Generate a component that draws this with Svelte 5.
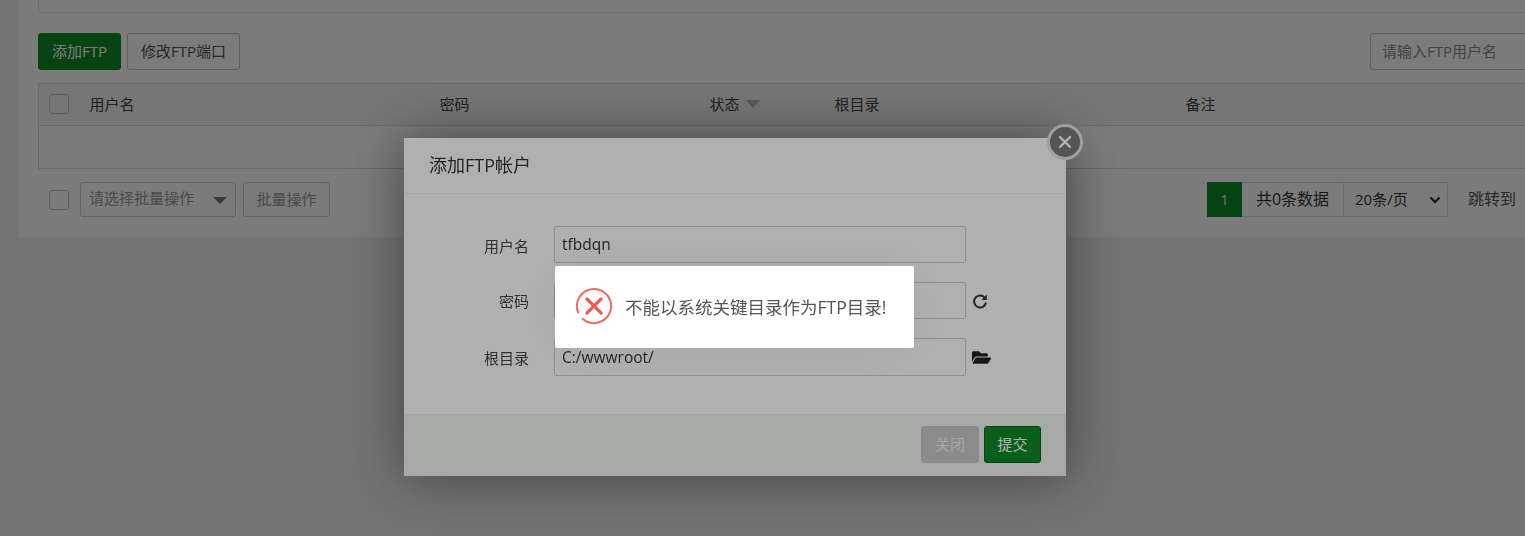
<script>
  const columns = [
    { label: '用户名', width: 350 },
    { label: '密码', width: 270 },
    { label: '状态', width: 125, sort: true },
    { label: '根目录', width: 351 },
    { label: '备注', width: 400 }
  ];
</script>

<div class="page">
  <main class="panel">
    <div class="topbox"></div>
    <div class="toolbar">
      <button class="btn primary">添加FTP</button>
      <button class="btn">修改FTP端口</button>
      <input class="search" placeholder="请输入FTP用户名" />
    </div>
    <table>
      <colgroup>
        <col class="check-col" />
        {#each columns as c}
          <col width={c.width} />
        {/each}
      </colgroup>
      <thead>
        <tr>
          <th><span class="checkbox head-check"></span></th>
          {#each columns as c}
            <th>{c.label}{#if c.sort}<span class="sort"></span>{/if}</th>
          {/each}
        </tr>
      </thead>
      <tbody>
        <tr><td colspan="6"></td></tr>
      </tbody>
    </table>
    <div class="bottombar">
      <span class="checkbox"></span>
      <div class="batch-select">请选择批量操作<span class="caret"></span></div>
      <button class="btn batch">批量操作</button>
      <div class="pager">
        <span class="current">1</span>
        <span class="total">共0条数据</span>
        <span class="per">20条/页
          <svg viewBox="0 0 12 8" width="12" height="8"><path d="M1.5 1.5 6 6l4.5-4.5" fill="none" stroke="#222" stroke-width="2"/></svg>
        </span>
        <span class="jump">跳转到</span>
      </div>
    </div>
  </main>
</div>

<div class="shade"></div>

<section class="modal">
  <header>添加FTP帐户</header>
  <span class="close">
    <svg viewBox="0 0 14 14" width="14" height="14"><path d="M2 2l10 10M12 2 2 12" stroke="#fff" stroke-width="2.4" stroke-linecap="round"/></svg>
  </span>
  <div class="form">
    <div class="row"><label for="u">用户名</label><input id="u" value="tfbdqn" /></div>
    <div class="row">
      <label for="p">密码</label><input id="p" />
      <svg class="tool" viewBox="0 0 16 16" width="16" height="16">
        <path d="M13 5A6 6 0 1 0 14 9.5" fill="none" stroke="#333" stroke-width="2"/>
        <path d="M14.8 1.6V7H9.4z" fill="#333"/>
      </svg>
    </div>
    <div class="row">
      <label for="r">根目录</label><input id="r" value="C:/wwwroot/" />
      <svg class="tool" viewBox="0 0 576 512" width="19" height="17"><path fill="#222" d="M572.694 292.093L500.27 416.248A63.997 63.997 0 0 1 444.989 448H45.025c-18.523 0-30.064-20.093-20.731-36.093l72.424-124.155A64 64 0 0 1 152 256h399.964c18.523 0 30.064 20.093 20.73 36.093zM152 224h328v-48c0-26.51-21.49-48-48-48H272l-64-64H48C21.49 64 0 85.49 0 112v278.046l69.077-118.418C86.214 242.25 117.989 224 152 224z"/></svg>
    </div>
  </div>
  <footer>
    <button class="btn muted">关闭</button>
    <button class="btn submit">提交</button>
  </footer>
</section>

<div class="shade"></div>

<div class="msg">
  <svg viewBox="0 0 40 40" width="38" height="38">
    <path d="M7.5 32.95A18 18 0 1 0 3.7 27.6" fill="none" stroke="#ea6a62" stroke-width="2.1"/>
    <path d="M12.5 12.5 27.5 27.5M27.5 12.5 12.5 27.5" stroke="#ec5a52" stroke-width="3.4" stroke-linecap="round"/>
  </svg>
  <span>不能以系统关键目录作为FTP目录!</span>
</div>

<style>
  :global(html), :global(body) {
    margin: 0;
    height: 536px;
    overflow: hidden;
    background: #eeeeee;
  }
  :global(body), button, input {
    font-family: "Open Sans", "Noto Sans CJK SC", sans-serif;
    font-size: 15px;
    color: #555;
  }
  .page {
    width: 1525px;
    padding-left: 19px;
    box-sizing: border-box;
    overflow: hidden;
  }
  .panel {
    width: 1560px;
    height: 237px;
    background: #fcfcfc;
    padding-left: 19px;
    box-sizing: border-box;
  }
  .topbox {
    height: 13px;
    border: 1px solid #e6e6e6;
    border-top: 0;
    box-sizing: border-box;
  }
  .toolbar {
    display: flex;
    gap: 6px;
    margin-top: 20px;
    height: 37px;
  }
  .btn {
    height: 37px;
    padding: 0 0 2px;
    border: 1px solid #c4c4c4;
    border-radius: 3px;
    background: transparent;
    box-sizing: border-box;
    white-space: nowrap;
  }
  .primary {
    width: 83px;
    background: #0f8a28;
    border-color: #0f8a28;
    color: #fff;
  }
  .toolbar .btn:nth-child(2) {
    width: 113px;
  }
  .search {
    margin-left: 1124px;
    width: 200px;
    height: 37px;
    padding: 0 0 2px 11px;
    border: 1px solid #c4c4c4;
    border-radius: 3px;
    background: transparent;
    box-sizing: border-box;
  }
  .search::placeholder {
    color: #8a8a8a;
  }
  table {
    margin-top: 13px;
    width: 1496px;
    table-layout: fixed;
    border-collapse: collapse;
    border: 1px solid #d8d8d8;
  }
  .check-col {
    width: 41px;
  }
  th {
    height: 39px;
    padding: 0 10px 2px;
    font-weight: 400;
    text-align: left;
    background: #f2f2f2;
    color: #444;
    border-bottom: 1px solid #d8d8d8;
  }
  td {
    height: 42px;
    padding: 0;
  }
  .checkbox {
    display: block;
    flex: none;
    width: 20px;
    height: 20px;
    border: 1px solid #c4c4c4;
    border-radius: 3px;
    background: transparent;
    box-sizing: border-box;
  }
  .sort {
    display: inline-block;
    margin-left: 6px;
    border: 7px solid transparent;
    border-top: 8px solid #b4b4b4;
    border-bottom: 0;
    vertical-align: 2px;
  }
  .bottombar {
    display: flex;
    align-items: center;
    margin-top: 13px;
    padding-left: 11px;
    height: 35px;
  }
  .batch-select {
    position: relative;
    width: 156px;
    height: 35px;
    margin-left: 11px;
    padding-left: 8px;
    line-height: 31px;
    border: 1px solid #d0d0d0;
    border-radius: 3px;
    box-sizing: border-box;
    color: #999;
  }
  .caret {
    position: absolute;
    right: 8px;
    top: 14px;
    border: 7px solid transparent;
    border-top: 7px solid #777;
    border-bottom: 0;
  }
  .batch {
    width: 87px;
    height: 35px;
    margin-left: 7px;
    border-color: #d0d0d0;
    color: #999;
  }
  .pager {
    display: flex;
    align-items: stretch;
    height: 35px;
    margin-left: 877px;
    line-height: 35px;
    white-space: nowrap;
  }
  .current {
    width: 35px;
    text-align: center;
    background: #0f8a28;
    color: #e8e8e8;
  }
  .total {
    width: 102px;
    font-size: 16px;
    line-height: 33px;
    text-align: center;
    color: #333;
    border: 1px solid #dcdcdc;
    border-left: 0;
    box-sizing: border-box;
  }
  .per {
    display: flex;
    align-items: center;
    justify-content: space-between;
    width: 104px;
    padding: 0 6px 0 11px;
    color: #333;
    border: 1px solid #dcdcdc;
    border-left: 0;
    box-sizing: border-box;
  }
  .jump {
    margin-left: 20px;
    font-size: 16px;
    color: #555;
  }
  .shade {
    position: fixed;
    inset: 0;
    background: rgba(0, 0, 0, 0.3);
  }
  .modal {
    position: fixed;
    left: 404px;
    top: 138px;
    width: 662px;
    height: 338px;
    display: flex;
    flex-direction: column;
    background: #fcfcfc;
    box-shadow: 1px 1px 50px rgba(0, 0, 0, 0.45);
  }
  .modal header {
    height: 56px;
    padding-left: 25px;
    line-height: 54px;
    font-size: 18px;
    color: #333;
    border-bottom: 1px solid #eee;
    box-sizing: border-box;
  }
  .close {
    position: absolute;
    right: -17px;
    top: -14px;
    display: flex;
    align-items: center;
    justify-content: center;
    width: 36px;
    height: 36px;
    border-radius: 50%;
    background: #7a7a7a;
    border: 3px solid #e4e4e4;
    box-sizing: border-box;
  }
  .form {
    flex: 1;
    display: flex;
    flex-direction: column;
    gap: 19px;
    padding-top: 32px;
  }
  .row {
    display: flex;
    align-items: center;
    height: 37px;
  }
  .row label {
    width: 125px;
    padding-top: 2px;
    text-align: right;
    color: #444;
  }
  .row input {
    width: 412px;
    height: 37px;
    margin-left: 25px;
    padding: 0 7px 2px;
    border: 1px solid #ccc;
    border-radius: 2px;
    background: transparent;
    box-sizing: border-box;
    font-size: 15.5px;
    color: #333;
  }
  .row:nth-child(2) label {
    padding-top: 0;
  }
  .row:last-child {
    height: 38px;
  }
  .row:last-child label {
    padding-top: 0;
  }
  .row:last-child input {
    height: 38px;
    padding-bottom: 0;
  }
  .tool {
    margin-left: 6px;
  }
  .modal footer {
    display: flex;
    justify-content: flex-end;
    align-items: flex-start;
    gap: 5px;
    height: 62px;
    padding: 11px 25px 0 0;
    background: #f0f2f0;
    border-top: 1px solid #e6ebe6;
    box-sizing: border-box;
  }
  .modal footer .btn {
    width: 58px;
  }
  .modal footer .muted {
    background: #c8c8c8;
    border-color: #c8c8c8;
    color: #eee;
  }
  .modal footer .submit {
    width: 57px;
    background: #0f8a28;
    border-color: #0a5f19;
    color: #fff;
  }
  .msg {
    position: fixed;
    left: 555px;
    top: 266px;
    width: 359px;
    height: 82px;
    display: flex;
    align-items: center;
    gap: 12px;
    padding: 0 0 2px 20px;
    box-sizing: border-box;
    background: #fff;
    border-radius: 2px;
    box-shadow: 1px 1px 50px rgba(0, 0, 0, 0.06);
    font-size: 17.5px;
    color: #555;
    white-space: nowrap;
  }
</style>
